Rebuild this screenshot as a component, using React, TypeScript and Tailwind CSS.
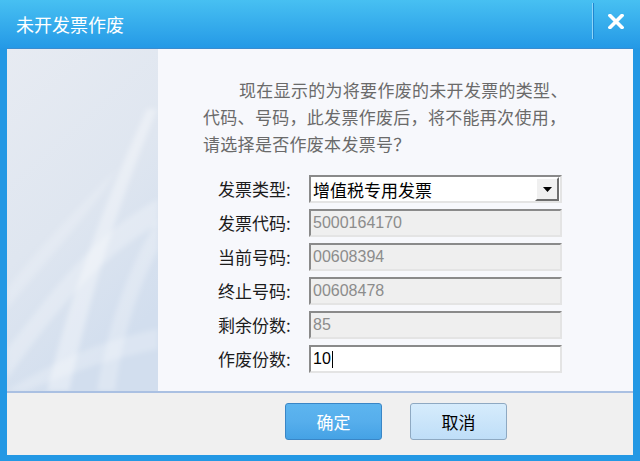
import React from 'react';

const cjk = { fontFamily: '"Noto Sans CJK SC", "Noto Sans", sans-serif' };
const num = { fontFamily: '"Liberation Sans", Arial, sans-serif' };

interface Field {
  label: string;
  value: string;
}

const readonlyFields: Field[] = [
  { label: '发票代码:', value: '5000164170' },
  { label: '当前号码:', value: '00608394' },
  { label: '终止号码:', value: '00608478' },
  { label: '剩余份数:', value: '85' },
];

function Swooshes() {
  // decorative waves on the left panel
  return (
    <svg width="151" height="342" viewBox="0 0 151 342" className="block">
      <defs>
        <linearGradient id="bg" x1="0" y1="0" x2="0.4" y2="1">
          <stop offset="0" stopColor="#e7ebf2" />
          <stop offset="0.55" stopColor="#dfe6f0" />
          <stop offset="1" stopColor="#d2deee" />
        </linearGradient>
        <filter id="soft">
          <feGaussianBlur stdDeviation="2.5" />
        </filter>
      </defs>
      <rect width="151" height="342" fill="url(#bg)" />
      <g filter="url(#soft)">
        <path d="M0 300 C 40 250, 80 190, 151 150 L151 175 C 90 210, 50 260, 0 330 Z" fill="#ffffff" opacity="0.25" />
        <path d="M40 342 C 60 260, 90 170, 140 60 L150 60 C 105 170, 80 260, 62 342 Z" fill="#ffffff" opacity="0.35" />
        <path d="M90 342 C 100 280, 120 220, 151 170 L151 200 C 130 240, 115 290, 108 342 Z" fill="#ffffff" opacity="0.25" />
        <path d="M0 240 C 30 200, 70 160, 110 120 C 80 170, 40 210, 0 260 Z" fill="#ffffff" opacity="0.18" />
        <path d="M0 342 C 50 310, 100 290, 151 280 L151 300 C 100 310, 60 325, 20 342 Z" fill="#ffffff" opacity="0.22" />
      </g>
    </svg>
  );
}

export default function App() {
  return (
    <div className="w-[640px] h-[461px] bg-[#2398e4] flex flex-col overflow-hidden" style={cjk}>
      {/* title bar */}
      <div className="h-[48px] bg-gradient-to-b from-[#47c0f2] to-[#2499e6] flex items-center justify-between pl-[16px] pr-[16px]">
        <span className="text-white text-[18px] leading-none">未开发票作废</span>
        <div className="flex items-center h-full">
          <div className="w-[1px] h-[36px] mb-[6px] bg-[#8ed5f8] border-r border-[#1f86cf] box-content" />
          <svg width="16" height="15" viewBox="0 0 16 15" className="ml-[14px] mb-[6px]">
            <path d="M2 1.5 L14 13.5 M14 1.5 L2 13.5" stroke="#ffffff" strokeWidth="3.6" strokeLinecap="square" />
          </svg>
        </div>
      </div>

      <div className="flex-1 mx-[7px] mb-[6px] flex flex-col">
        {/* content */}
        <div className="h-[343px] flex border-t border-[#3a8cd0]">
          <Swooshes />
          <div className="flex-1 bg-[#f7f8fc] pl-[45px] pt-[27px]">
            <p className="text-[17px] leading-[27px] text-[#6a6a6a] tracking-[0.3px]">
              <span className="pl-[36px]">现在显示的为将要作废的未开发票的类型、</span>
              <br />
              代码、号码，此发票作废后，将不能再次使用，
              <br />
              请选择是否作废本发票号？
            </p>

            <div className="mt-[18px] ml-[15px] flex flex-col gap-[6px]">
              <div className="flex items-center h-[28px]">
                <span className="w-[91px] text-[17px] text-[#1c1c1c]">发票类型:</span>
                <div className="w-[253px] h-[28px] border-2 border-t-[#8a8a8a] border-l-[#8a8a8a] border-r-[#e4e4e4] border-b-[#e4e4e4] bg-white flex items-center">
                  <span className="flex-1 pl-[2px] text-[17px] text-black leading-none">增值税专用发票</span>
                  <div className="w-[24px] h-[24px] mr-[1px] bg-[#f0f0f0] border-2 border-t-[#ffffff] border-l-[#ffffff] border-r-[#6e6e6e] border-b-[#6e6e6e] flex items-center justify-center">
                    <svg width="9" height="5" viewBox="0 0 9 5">
                      <path d="M0 0 H9 L4.5 5 Z" fill="#000" />
                    </svg>
                  </div>
                </div>
              </div>

              {readonlyFields.map((f) => (
                <div key={f.label} className="flex items-center h-[28px]">
                  <span className="w-[91px] text-[17px] text-[#1c1c1c]">{f.label}</span>
                  <div className="w-[253px] h-[28px] border-2 border-t-[#8a8a8a] border-l-[#8a8a8a] border-r-[#e4e4e4] border-b-[#e4e4e4] bg-[#efefef] flex items-center pl-[2px]">
                    <span className="text-[16px] text-[#8c8c8c] leading-none" style={num}>{f.value}</span>
                  </div>
                </div>
              ))}

              <div className="flex items-center h-[28px]">
                <span className="w-[91px] text-[17px] text-[#1c1c1c]">作废份数:</span>
                <div className="w-[253px] h-[28px] border-2 border-t-[#8a8a8a] border-l-[#8a8a8a] border-r-[#e4e4e4] border-b-[#e4e4e4] bg-white flex items-center pl-[2px]">
                  <span className="text-[16px] text-black leading-none" style={num}>10</span>
                  <span className="w-[1px] h-[17px] bg-black ml-[1px]" />
                </div>
              </div>
            </div>
          </div>
        </div>

        {/* footer */}
        <div className="flex-1 bg-[#f0f0f0] border-t-2 border-[#aac0e2] flex items-start pt-[10px] pl-[278px] gap-[28px]">
          <button className="w-[97px] h-[37px] rounded-[3px] border border-[#3a86c6] bg-gradient-to-b from-[#5db5ef] via-[#56aeec] to-[#45a2e5] text-white text-[17px]">
            确定
          </button>
          <button className="w-[97px] h-[37px] rounded-[3px] border border-[#8ea9c2] bg-gradient-to-b from-[#d6ecfc] to-[#bfdef8] text-black text-[17px]">
            取消
          </button>
        </div>
      </div>
    </div>
  );
}
